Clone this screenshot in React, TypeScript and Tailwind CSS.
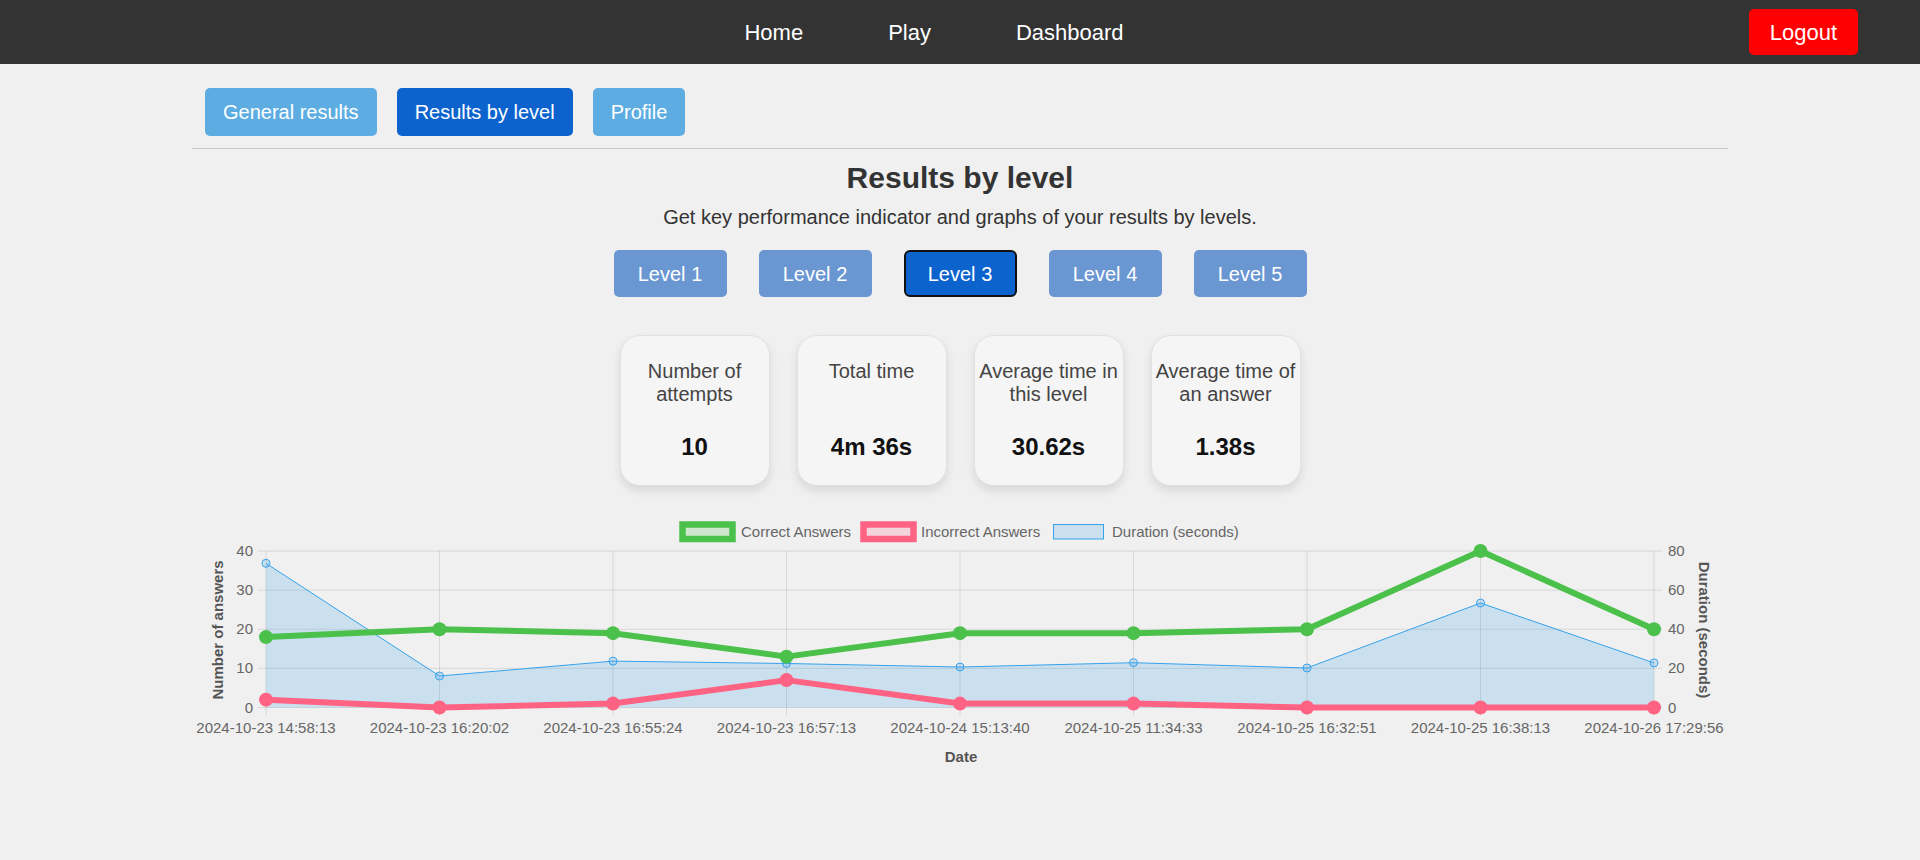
import React from "react";

const labels = [
  "2024-10-23 14:58:13",
  "2024-10-23 16:20:02",
  "2024-10-23 16:55:24",
  "2024-10-23 16:57:13",
  "2024-10-24 15:13:40",
  "2024-10-25 11:34:33",
  "2024-10-25 16:32:51",
  "2024-10-25 16:38:13",
  "2024-10-26 17:29:56",
];
const correct = [18, 20, 19, 13, 19, 19, 20, 40, 20];
const incorrect = [2, 0, 1, 7, 1, 1, 0, 0, 0];
const duration = [73.7, 16.1, 23.7, 22.5, 20.7, 22.9, 20.2, 53.4, 22.8];

const stats = [
  { label: "Number of attempts", value: "10" },
  { label: "Total time", value: "4m 36s" },
  { label: "Average time in this level", value: "30.62s" },
  { label: "Average time of an answer", value: "1.38s" },
];

// plot geometry in page pixels
const left = 266;
const right = 1654;
const top = 551;
const bottom = 707.5;
const xAt = (i: number) => left + (i * (right - left)) / 8;
const yL = (v: number) => bottom - (v * (bottom - top)) / 40;
const yR = (v: number) => bottom - (v * (bottom - top)) / 80;

const FONT = "Liberation Sans, Arial, sans-serif";

function Chart() {
  const greenPts = correct.map((v, i) => `${xAt(i)},${yL(v)}`).join(" ");
  const pinkPts = incorrect.map((v, i) => `${xAt(i)},${yL(v)}`).join(" ");
  const bluePts = duration.map((v, i) => `${xAt(i)},${yR(v)}`).join(" ");
  const blueArea = `${left},${bottom} ${bluePts} ${right},${bottom}`;

  return (
    <svg
      width={1536}
      height={260}
      viewBox="192 510 1536 260"
      className="block"
      fontFamily={FONT}
    >
      {/* legend */}
      <rect x={682.5} y={524.5} width={50} height={14.5} fill="rgba(75,192,75,0.2)" stroke="#4bc04b" strokeWidth={6.5} />
      <text x={741} y={537} fontSize={15} fill="#666">Correct Answers</text>
      <rect x={863.5} y={524.5} width={50} height={14.5} fill="rgba(255,99,132,0.2)" stroke="#ff6384" strokeWidth={6.5} />
      <text x={921} y={537} fontSize={15} fill="#666">Incorrect Answers</text>
      <rect x={1053.5} y={524.5} width={50} height={14.5} fill="rgba(54,162,235,0.2)" stroke="#36a2eb" strokeWidth={1} />
      <text x={1112} y={537} fontSize={15} fill="#666">Duration (seconds)</text>

      {/* grid */}
      {[0, 10, 20, 30, 40].map((v) => (
        <line key={`h${v}`} x1={left - 8} x2={right + 8} y1={yL(v)} y2={yL(v)} stroke="rgba(0,0,0,0.1)" strokeWidth={1} />
      ))}
      {labels.map((_, i) => (
        <line key={`v${i}`} x1={xAt(i)} x2={xAt(i)} y1={top} y2={bottom + 8} stroke="rgba(0,0,0,0.1)" strokeWidth={1} />
      ))}

      {/* left ticks */}
      {[0, 10, 20, 30, 40].map((v) => (
        <text key={`l${v}`} x={253} y={yL(v) + 5} fontSize={15} fill="#666" textAnchor="end">
          {v}
        </text>
      ))}
      {/* right ticks */}
      {[0, 20, 40, 60, 80].map((v) => (
        <text key={`r${v}`} x={1668} y={yR(v) + 5} fontSize={15} fill="#666">
          {v}
        </text>
      ))}
      {/* x labels */}
      {labels.map((l, i) => (
        <text key={l} x={xAt(i)} y={732.5} fontSize={15} fill="#666" textAnchor="middle">
          {l}
        </text>
      ))}
      <text x={961} y={762} fontSize={15} fontWeight="bold" fill="#555" textAnchor="middle">
        Date
      </text>
      <text
        transform="translate(217,630) rotate(-90)"
        fontSize={15}
        fontWeight="bold"
        fill="#555"
        textAnchor="middle"
        dominantBaseline="central"
      >
        Number of answers
      </text>
      <text
        transform="translate(1704,630) rotate(90)"
        fontSize={15}
        fontWeight="bold"
        fill="#555"
        textAnchor="middle"
        dominantBaseline="central"
      >
        Duration (seconds)
      </text>

      {/* duration */}
      <polygon points={blueArea} fill="rgba(54,162,235,0.2)" />
      <polyline points={bluePts} fill="none" stroke="#36a2eb" strokeWidth={1} />
      {duration.map((v, i) => (
        <circle key={`b${i}`} cx={xAt(i)} cy={yR(v)} r={4} fill="rgba(54,162,235,0.2)" stroke="#36a2eb" strokeWidth={1} />
      ))}

      {/* incorrect */}
      <polyline points={pinkPts} fill="none" stroke="#ff6384" strokeWidth={6} strokeLinejoin="round" />
      {incorrect.map((v, i) => (
        <circle key={`p${i}`} cx={xAt(i)} cy={yL(v)} r={7} fill="#ff6384" />
      ))}

      {/* correct */}
      <polyline points={greenPts} fill="none" stroke="#4bc04b" strokeWidth={6} strokeLinejoin="round" />
      {correct.map((v, i) => (
        <circle key={`g${i}`} cx={xAt(i)} cy={yL(v)} r={7} fill="#4bc04b" />
      ))}
    </svg>
  );
}

export default function App() {
  return (
    <div className="min-h-screen bg-[#f0f0f0] font-['Liberation_Sans',Arial,sans-serif]">
      <header className="flex h-16 items-center bg-[#333333]">
        <div className="flex-1" />
        <nav className="mr-[52px] flex gap-[85px] text-[22px] leading-normal text-white">
          <a href="#">Home</a>
          <a href="#">Play</a>
          <a href="#">Dashboard</a>
        </nav>
        <div className="flex flex-1 justify-end">
          <button className="mr-[62px] h-[46px] rounded-[5px] bg-[#ff0000] px-[21px] text-[22px] text-white">
            Logout
          </button>
        </div>
      </header>

      <main className="mx-auto w-[80%]">
        <div className="flex gap-[20px] pl-[13px] pt-6">
          <button className="h-12 rounded-[5px] bg-[#5dade2] px-[18px] text-[20px] text-white">
            General results
          </button>
          <button className="h-12 rounded-[5px] bg-[#0d63ce] px-[18px] text-[20px] text-white">
            Results by level
          </button>
          <button className="h-12 rounded-[5px] bg-[#5dade2] px-[18px] text-[20px] text-white">
            Profile
          </button>
        </div>
        <div className="mt-3 h-px bg-[#c8c8c8]" />

        <h2 className="mt-3 text-center text-[30px] font-bold leading-[34px] text-[#333]">
          Results by level
        </h2>
        <p className="mt-[11px] text-center text-[20px] leading-[23px] text-[#333]">
          Get key performance indicator and graphs of your results by levels.
        </p>

        <div className="mt-[21px] flex justify-center gap-8">
          {[1, 2, 3, 4, 5].map((n) => (
            <button
              key={n}
              className={
                n === 3
                  ? "h-[47px] w-[113px] rounded-[6px] border-2 border-[#111] bg-[#0d63ce] text-[20px] text-white"
                  : "h-[47px] w-[113px] rounded-[5px] bg-[#6a96d2] text-[20px] text-white"
              }
            >
              Level {n}
            </button>
          ))}
        </div>

        <div className="mt-[38px] flex justify-center gap-[27px]">
          {stats.map((s) => (
            <div
              key={s.label}
              className="flex h-[151px] w-[150px] flex-col items-center justify-between rounded-[20px] border border-[#e2e2e2] bg-[#f5f5f5] px-1 pb-[24px] pt-[24px] text-center shadow-[0_5px_10px_rgba(0,0,0,0.1)]"
            >
              <div className="text-[20px] leading-[23px] text-[#444]">{s.label}</div>
              <div className="text-[24px] font-bold leading-[28px] text-[#111]">{s.value}</div>
            </div>
          ))}
        </div>

        <div className="mt-6">
          <Chart />
        </div>
      </main>
    </div>
  );
}
